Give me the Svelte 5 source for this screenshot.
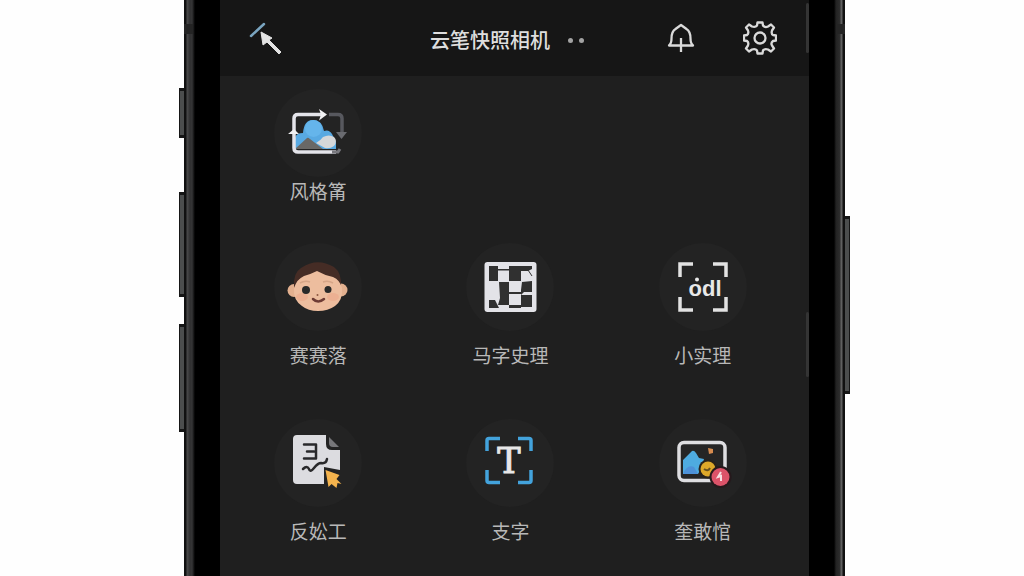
<script lang="ts">
	const featured = [{ id: 'style', label: '风格筩' }];

	const tools = [
		{ id: 'face', label: '赛赛落' },
		{ id: 'mosaic', label: '马字史理' },
		{ id: 'ocr', label: '小实理' },
		{ id: 'note', label: '反妐工' },
		{ id: 'text', label: '支字' },
		{ id: 'sticker', label: '奎敢悺' }
	];

	let active = $state<string | null>(null);
</script>

{#snippet icon(id: string)}
	<svg class="icon" viewBox="0 0 88 88" aria-hidden="true">
		{#if id === 'style'}
			<path d="M21 60V49q1-5 8-5 1-13 10-13 9 0 11 11 5-2 8 3l4 8v7z" fill="#58a9e2" />
			<circle cx="39.5" cy="39.5" r="8.5" fill="#65b5eb" />
			<path d="M21 60 33 49q1-1 3 1l13 10z" fill="#696866" />
			<path d="M42 54q5-3 7-6 6-3 11 0 4 4 0 9-4 3-9 2z" fill="#d5d7d9" />
			<path d="M47 25.5H24q-4 0-4 4V59q0 4 4 4h38" fill="none" stroke="#e4e4ea" stroke-width="3.5" />
			<path d="M55 25.5h9q4 0 4 4V44" fill="none" stroke="#57585e" stroke-width="3.5" />
			<path d="M58 63h6l2-3" fill="none" stroke="#77777d" stroke-width="3" />
			<path d="m45 20 8 5.5-8 6 2-6zM14 45l6-5 5 5z" fill="#f0f0f2" />
			<path d="M62 43h11l-5.500 7z" fill="#6a6b70" />
		{:else if id === 'face'}
			<circle cx="20" cy="47.5" r="6.5" fill="#e3b08f" />
			<circle cx="67" cy="47" r="6.5" fill="#e3b08f" />
			<path d="M20 44q-1-14 7-19 16-11 33-1 8 6 7 20L62 55H25z" fill="#452c25" />
			<path d="M43 28q-6 3-13 5-7 3-10 12-1 12 8 18 6 5 16 5t17-5q8-6 7-18-2-8-9-11-9-2-16-6z" fill="#edbd9e" />
			<ellipse cx="28" cy="54" rx="6" ry="4" fill="#ecb092" />
			<ellipse cx="59" cy="54" rx="6" ry="4" fill="#ecb092" />
			<path d="M26 40q5-3 10-1M49 39q5-2 10 1" fill="none" stroke="#d6a587" stroke-width="1.5" />
			<circle cx="32" cy="47" r="4" fill="#292929" />
			<circle cx="54" cy="46.5" r="3.5" fill="#292929" />
			<circle cx="43.5" cy="52" r="1" fill="#8c5540" />
			<path d="M39 56q5 5 11 0" fill="none" stroke="#6d3b34" stroke-width="2.5" stroke-linecap="round" />
		{:else if id === 'mosaic'}
			<rect x="18.5" y="19" width="52" height="50" rx="3" fill="#e3e3e8" />
			<path
				d="M23 23h9v15h-9zM32 26h11v1.500H32zM43 23h12v15H43zM55 23h11v3l-4 2h-7zM33 39h10v23H32l2-7zM43 49h12v2H43zM56 39l10-1v11h-8l-3 3v-5zM55 52h11v12H55zM43 62h12v3H43zM23 57h6l4 8H23z"
				fill="#303030"
			/>
			<path d="m62 27 4 6" stroke="#303030" />
		{:else if id === 'ocr'}
			<path d="M34 21H21v13M54 21h13v13M34 67H21V54M54 67h13V54" fill="none" stroke="#e2e2e2" stroke-width="3.5" />
			<text class="scan" x="46" y="53">odl</text>
			<circle cx="38" cy="36.5" r="2" fill="#e8e8e8" />
		{:else if id === 'note'}
			<path d="M23 16h29v9q0 6 6 6h8v20l-16-3v17H23q-4 0-4-4V20q0-4 4-4z" fill="#dcdce0" />
			<path d="M55 18v6q0 4 4 4h6z" fill="#77777a" />
			<path
				d="M30 25.5h12v14H30M33 32.5h7M29 50q4-4 6 0 1 4 5-1 4-5 7-5 5 1 6-4"
				fill="none"
				stroke="#29292b"
				stroke-width="2.5"
				stroke-linecap="round"
				stroke-linejoin="round"
			/>
			<path d="m51.5 51 14 5-3 4 5 5-4-1-1 5-5-4-3 3z" fill="#f4b34d" />
		{:else if id === 'text'}
			<path
				d="M34 19.5H23q-2 0-2 2V32M52 19.5h11q2 0 2 2V32M34 63.5H23q-2 0-2-2V51M52 63.5h11q2 0 2-2V51"
				fill="none"
				stroke="#43a3dc"
				stroke-width="3.5"
			/>
			<text class="letter" x="43" y="54">T</text>
		{:else if id === 'sticker'}
			<rect x="20" y="23.5" width="46" height="38" rx="5" fill="#252525" stroke="#dedee1" stroke-width="3.5" />
			<path d="M24 41 33 32q2-1 4 2l3 5 5 1-2 8-4 7H24z" fill="#4eabe0" />
			<path d="M24 55q4-10 11-7l4 7z" fill="#4d91d8" />
			<path d="m49 29 5 1v4l-4 1z" fill="#d68b4f" />
			<circle cx="49" cy="50" r="9.5" fill="#28221b" />
			<circle cx="49" cy="50" r="7.5" fill="#dda829" />
			<path d="M45 50q4 3 6-1" fill="none" stroke="#66501e" stroke-width="2" />
			<circle cx="61.5" cy="58" r="11" fill="#26191c" />
			<circle cx="61.5" cy="58" r="9" fill="#dc5369" />
			<path d="m62 53-3 5 3-1v5" fill="none" stroke="#f7dfe2" stroke-width="2" />
		{/if}
	</svg>
{/snippet}

{#snippet tile(item: { id: string; label: string })}
	<li>
		<button class="tile" aria-pressed={active === item.id} onclick={() => (active = item.id)}>
			<span class="disc">{@render icon(item.id)}</span>
			<span class="label">{item.label}</span>
		</button>
	</li>
{/snippet}

<div class="page">
	<div class="phone">
		<i class="key mute"></i>
		<i class="key up"></i>
		<i class="key down"></i>
		<i class="key power"></i>

		<main class="screen">
			<header>
				<button class="plain" aria-label="Back">
					<svg width="34" height="34" viewBox="0 0 34 34">
						<path d="M2 15 15 3" stroke="#7aa5c0" stroke-width="2.5" stroke-linecap="round" />
						<path d="m12 11 11 6-3 2 12 12-2 2-12-12-4 3z" fill="#e3e3e3" stroke="#e3e3e3" stroke-linejoin="round" />
					</svg>
				</button>

				<div class="heading">
					<h1>云笔快照相机</h1>
					<button class="plain more" aria-label="More">
						<i></i>
						<i></i>
					</button>
				</div>

				<nav>
					<button class="plain" aria-label="Notifications">
						<svg width="28" height="34" viewBox="0 0 28 34">
							<path
								d="M2 24.5q2.500-2 2.500-7 0-7 4-9.500L14 4l5.500 4q4 2.500 4 9.500 0 5 2.500 7zM14 17v14"
								fill="none"
								stroke="#dadada"
								stroke-width="2.3"
								stroke-linejoin="round"
							/>
						</svg>
					</button>
					<button class="plain" aria-label="Settings">
						<svg width="34" height="34" viewBox="0 0 34 34" fill="none" stroke="#dadada" stroke-width="2.3" stroke-linejoin="round">
							<path
								d="M14.500 1.500h5l.5 3q2 2.500 5 1l3-2 3 3-2 3q-1 3.500 1 4.500l3 .5v5l-3 .5q-2.500 2-1 4.500l2 3-3 3-3-2q-3.500-1-5 1l-.5 3h-5l-.5-3q-1.500-2-5-1l-3 2-3-3 2-3q1-3-1-4.500l-3-.5v-5l3-.5q2-1.500 1-4.500l-2-3 3-3 3 2q3.500 1 5-1z"
							/>
							<circle cx="17" cy="17" r="5.5" />
						</svg>
					</button>
				</nav>
			</header>

			<ul class="grid featured">
				{#each featured as item}
					{@render tile(item)}
				{/each}
			</ul>

			<ul class="grid tools">
				{#each tools as item}
					{@render tile(item)}
				{/each}
			</ul>

			<i class="scroll top"></i>
			<i class="scroll mid"></i>
		</main>
	</div>
</div>

<style>
	:global(body) { margin: 0; background: #fefefe; }

	.page {
		display: flex;
		justify-content: center;
		padding-left: 5px;
		font-family: "Noto Sans CJK SC", sans-serif;
	}

	.phone {
		position: relative;
		box-sizing: border-box;
		width: 100%;
		max-width: 661px;
		min-height: 100vh;
		padding: 0 36px;
		background:
			linear-gradient(#242424, #242424) 0 24px / 9px 10px no-repeat,
			linear-gradient(#242424, #242424) 100% 24px / 9px 10px no-repeat,
			linear-gradient(to right, #111 2px, #4a4a4b 3px, #303031 6px, #353536 8px, #000 11px, #000 calc(100% - 11px), #222 calc(100% - 9px), #2d2d2d calc(100% - 5px), #606060 calc(100% - 4px), #606060 calc(100% - 3px), #111 calc(100% - 2px));
	}

	.key {
		position: absolute;
		left: -5px;
		box-sizing: border-box;
		width: 5px;
		border: solid #161616;
		border-width: 3px 0 3px 1px;
		background: #4c4e4e;
	}
	.mute { top: 88px; height: 50px; }
	.up { top: 192px; height: 105px; }
	.down { top: 324px; height: 108px; }
	.power { top: 216px; left: auto; right: -5px; height: 178px; border-width: 3px 1px 3px 0; }

	.screen { position: relative; min-height: 100vh; background: #1f1f1f; }

	header {
		display: grid;
		grid-template-columns: 1fr auto 1fr;
		align-items: center;
		height: 76px;
		padding: 0 32px 0 29px;
		background: #161616;
	}

	button { border: 0; background: none; font: inherit; cursor: pointer; }
	.plain { display: flex; padding: 0; justify-self: start; }
	.heading { display: flex; align-items: center; gap: 18px; padding-top: 4px; }
	h1 { margin: 0; color: #dedede; font-size: 20px; font-weight: 500; line-height: 28px; }
	.more { gap: 6px; padding-right: 12px; }
	.more i { width: 5px; height: 5px; border-radius: 50%; background: #a3a3a3; }
	nav { display: flex; justify-content: flex-end; gap: 48px; }

	.grid {
		display: grid;
		grid-template-columns: repeat(3, 1fr);
		row-gap: 50px;
		margin: 0;
		padding: 0 10px 0 2px;
		list-style: none;
	}
	.featured { padding-top: 13px; }
	.tools { padding-top: 38px; padding-bottom: 24px; }

	.tile {
		display: flex;
		flex-direction: column;
		align-items: center;
		gap: 10px;
		width: 100%;
		padding: 0;
	}
	.featured .tile { gap: 0; }
	.disc { width: 88px; height: 88px; border-radius: 50%; background: #232323; }
	.icon { display: block; width: 88px; height: 88px; }
	.label { color: #b8b8b8; font-size: 19px; line-height: 28px; }

	.scan { fill: #e8e8e8; font: bold 22px "Liberation Sans", sans-serif; text-anchor: middle; }
	.letter { fill: #e8e8e8; stroke: #e8e8e8; font: 35px "DejaVu Serif", serif; text-anchor: middle; }

	.scroll { position: absolute; right: 0; width: 3px; border-radius: 2px; background: #343434; }
	.top { top: 3px; height: 50px; }
	.mid { top: 312px; height: 65px; }
</style>
